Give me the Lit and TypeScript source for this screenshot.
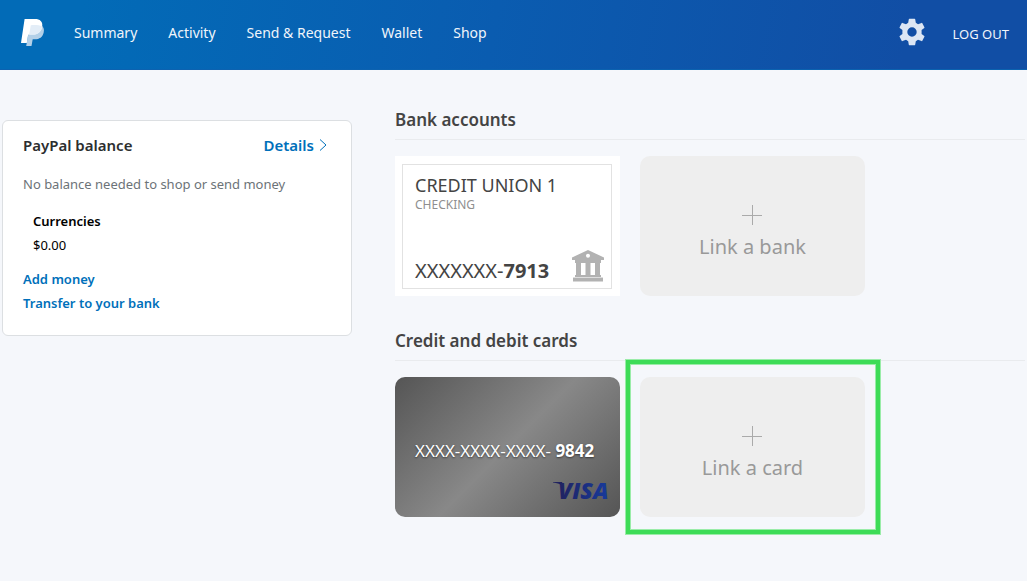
import { LitElement, html, css, svg } from "lit";
import { customElement, property } from "lit/decorators.js";

@customElement("site-header")
class SiteHeader extends LitElement {
  static styles = css`
    :host {
      display: block;
    }
    .bar {
      box-sizing: border-box;
      height: 70px;
      padding: 0 18px 3px 21px;
      display: flex;
      align-items: center;
      color: #fff;
      background: linear-gradient(100deg, #026bb7 8%, #0a5cb0 48%, #114ea5 88%);
      border-bottom: 1px solid #0c62b0;
    }
    .logo {
      display: block;
      width: 24px;
      height: 28px;
      margin-right: 29px;
    }
    .logo svg,
    .gear svg {
      display: block;
    }
    .nav {
      display: flex;
      gap: 31px;
      flex: 1;
    }
    a {
      color: #f0f5fb;
      text-decoration: none;
      font-size: 14px;
      line-height: 20px;
    }
    .gear {
      padding: 0 0 2px;
      border: 0;
      background: none;
      margin-right: 28px;
    }
    .logout {
      font-size: 13px;
      padding-top: 2px;
    }
  `;
  render() {
    const items = ["Summary", "Activity", "Send & Request", "Wallet", "Shop"];
    return html`<header class="bar">
      <a class="logo" href="#" aria-label="PayPal">
        <svg width="24" height="28" viewBox="0 0 24 28">
          <path d="M9 6h10.500c3 1.500 4 4 3.200 7.400-1 4.600-4.200 6.800-8.800 6.800h-2.200L10.500 27H5.200z" fill="#b3d0e8" />
          <path d="M3.600 0H14c5 0 8 2.600 7.200 7.400-1 5.600-4.600 8.200-9.600 8.200H8.200c-.7 0-1 .5-1.200 1.200L5.800 24H0z" fill="#fff" />
          <path d="M9.800 6.200c3.600-.6 8.200-.4 11.400 1.200-1 5.600-4.600 8.200-9.600 8.200H8.200z" fill="#e3edf7" />
        </svg>
      </a>
      <nav class="nav">${items.map((t) => html`<a href="#">${t}</a>`)}</nav>
      <button class="gear" aria-label="Settings">
        <svg width="26" height="28" viewBox="0 0 26 28">
          <path
            fill="#dce6f4"
            fill-rule="evenodd"
            d="M9.800 1.200Q9.900.8 10.300.8h5.400q.4 0 .5.400l.6 3.600 2.200 1.400 3.500-1.300q.5-.2.700.2l2.200 4.100q.2.400-.1.700l-2.700 2.200v3.800l2.700 2.200q.3.300.1.700l-2.200 4.100q-.2.400-.7.200L19 21.800l-2.200 1.400-.6 3.600q-.1.400-.5.400h-5.400q-.4 0-.5-.4l-.6-3.600L7 21.800l-3.500 1.300q-.5.200-.7-.2L.600 18.800q-.2-.4.100-.7l2.700-2.200v-3.800L.700 9.900Q.400 9.600.600 9.200l2.200-4.100q.2-.4.700-.2L7 6.200l2.200-1.400zM13 9.300a4.700 4.700 0 1 0 0 9.400 4.700 4.700 0 1 0 0-9.400z"
          />
        </svg>
      </button>
      <a class="logout" href="#">LOG OUT</a>
    </header>`;
  }
}

@customElement("balance-card")
class BalanceCard extends LitElement {
  static styles = css`
    :host {
      display: block;
    }
    .card {
      background: #fff;
      border: 1px solid #dcdfe2;
      border-radius: 6px;
      padding: 13px 20px 20px;
      font-size: 13px;
      line-height: 24px;
    }
    .top {
      display: flex;
      justify-content: space-between;
      align-items: center;
      margin-bottom: 16px;
      padding-right: 4px;
    }
    h2 {
      margin: 0;
      font-size: 15px;
      line-height: 22px;
      font-weight: 600;
      color: #2c2e2f;
    }
    a {
      color: #0070ba;
      font-weight: 600;
      text-decoration: none;
    }
    .details {
      display: flex;
      align-items: center;
      gap: 5px;
      font-size: 15px;
      line-height: 22px;
    }
    .note {
      margin: 0 0 13px;
      color: #6c7378;
    }
    .money {
      margin: 0 0 10px 10px;
      color: #000;
    }
    dt {
      font-weight: 600;
    }
    dd {
      margin: 0;
    }
    .links {
      display: flex;
      flex-direction: column;
      align-items: flex-start;
    }
  `;
  render() {
    return html`<section class="card">
      <div class="top">
        <h2>PayPal balance</h2>
        <a class="details" href="#">
          Details
          <svg width="8" height="12" viewBox="0 0 8 12">
            <path d="M1 .5l6 5.500-6 5.500" fill="none" stroke="#0070ba" />
          </svg>
        </a>
      </div>
      <p class="note">No balance needed to shop or send money</p>
      <dl class="money">
        <dt>Currencies</dt>
        <dd>$0.00</dd>
      </dl>
      <div class="links">
        <a href="#">Add money</a>
        <a href="#">Transfer to your bank</a>
      </div>
    </section>`;
  }
}

@customElement("link-tile")
class LinkTile extends LitElement {
  @property() label = "";
  @property({ type: Boolean }) highlighted = false;
  static styles = css`
    :host {
      display: block;
      position: relative;
    }
    .tile {
      box-sizing: border-box;
      width: 100%;
      height: 140px;
      padding: 14px 0 0;
      border: 0;
      border-radius: 10px;
      background: #eee;
      color: #999;
      font-family: inherit;
      font-size: 20px;
      line-height: 28px;
      display: flex;
      flex-direction: column;
      align-items: center;
      justify-content: center;
      gap: 8px;
    }
    .ring {
      position: absolute;
      inset: -17px -15px -17px -14px;
      border: 4px solid #3ddc57;
      box-shadow: 0 0 0 1px #9aeca8, inset 0 0 0 1px #9aeca8;
      pointer-events: none;
    }
  `;
  render() {
    return html`<button class="tile">
        <svg width="21" height="20" viewBox="0 0 21 20">
          <path d="M0 10.500h20M10.500 0v20" stroke="#aaa" />
        </svg>
        <span>${this.label}</span>
      </button>
      ${this.highlighted ? html`<div class="ring"></div>` : ""}`;
  }
}

@customElement("app-root")
class AppRoot extends LitElement {
  static styles = css`
    :host {
      display: block;
      min-height: 100vh;
      background: #f5f7fb;
      font-family: "Noto Sans", "Open Sans", sans-serif;
    }
    .page {
      display: grid;
      grid-template-columns: 350px minmax(0, 1fr);
      column-gap: 43px;
      align-items: start;
      padding: 37px 2px 0;
    }
    .side {
      padding-top: 13px;
    }
    .group {
      margin-bottom: 32px;
    }
    .group h2 {
      margin: 0 0 16px;
      padding-bottom: 6px;
      border-bottom: 1px solid #e9ebee;
      color: #444;
      font-size: 17px;
      line-height: 26px;
      font-weight: 600;
    }
    .tiles {
      display: grid;
      grid-template-columns: repeat(auto-fill, 225px);
      gap: 20px;
    }
    .bank,
    .credit {
      box-sizing: border-box;
      height: 140px;
      text-decoration: none;
    }
    .bank {
      background: #fff;
      padding: 8px 8px 7px 7px;
    }
    .frame {
      box-sizing: border-box;
      height: 100%;
      border: 1px solid #e2e2e2;
      padding: 8px 7px 4px 12px;
      display: flex;
      flex-direction: column;
      justify-content: space-between;
      color: #444;
    }
    .name {
      font-size: 18px;
      line-height: 24px;
    }
    .kind {
      font-size: 12px;
      line-height: 16px;
      color: #8f8f8f;
    }
    .row {
      display: flex;
      justify-content: space-between;
      align-items: flex-end;
      font-size: 20px;
      line-height: 26px;
    }
    .row svg {
      margin-bottom: 2px;
    }
    .row b,
    .number b {
      font-weight: 700;
    }
    .credit {
      display: flex;
      flex-direction: column;
      justify-content: flex-end;
      border-radius: 10px;
      padding: 0 8px 16px 20px;
      color: #fff;
      background: linear-gradient(135deg, #555 0%, #888 50%, #555 100%);
    }
    .number {
      font-size: 17px;
      line-height: 24px;
      margin-bottom: 16px;
      text-shadow: 0 1px 2px rgba(0, 0, 0, 0.5);
      white-space: nowrap;
    }
    .visa {
      align-self: flex-end;
      display: block;
      overflow: visible;
    }
  `;
  bankIcon() {
    return svg`<svg width="32" height="32" viewBox="0 0 32 32" fill="#b2b2b2">
      <path fill-rule="evenodd" d="M16 0l16 7.500V10H0V7.500zM16 3.700a2 2 0 1 0 0 4 2 2 0 1 0 0-4z"/>
      <path d="M3 10h26v3H3zM3 25h26v2.500H3zM1 28h30v3.500H1zM4 13h5v12H4zM13.500 13h5v12h-5zM23 13h5v12h-5z"/>
      <path fill="#ddd" d="M1 27h30v1H1z"/>
    </svg>`;
  }
  render() {
    return html`<site-header></site-header>
      <main class="page">
        <aside class="side"><balance-card></balance-card></aside>
        <div>
          <section class="group">
            <h2>Bank accounts</h2>
            <div class="tiles">
              <a class="bank" href="#">
                <div class="frame">
                  <div>
                    <div class="name">CREDIT UNION 1</div>
                    <div class="kind">CHECKING</div>
                  </div>
                  <div class="row">
                    <span>XXXXXXX-<b>7913</b></span>
                    ${this.bankIcon()}
                  </div>
                </div>
              </a>
              <link-tile label="Link a bank"></link-tile>
            </div>
          </section>
          <section class="group">
            <h2>Credit and debit cards</h2>
            <div class="tiles">
              <a class="credit" href="#">
                <div class="number">XXXX-XXXX-XXXX- <b>9842</b></div>
                <svg class="visa" width="60" height="22" viewBox="0 0 60 22" role="img" aria-label="Visa">
                  <defs>
                    <linearGradient id="v" x1="0" x2="1">
                      <stop offset="0" stop-color="#20225f" />
                      <stop offset="1" stop-color="#173a9c" />
                    </linearGradient>
                  </defs>
                  <path d="M1 3h9l2 5Q7 4 1 3.600z" fill="#20225f" />
                  <text x="6" y="20" fill="url(#v)" font-family="Open Sans, sans-serif" font-size="23" font-weight="800" font-style="italic">VISA</text>
                </svg>
              </a>
              <link-tile label="Link a card" highlighted></link-tile>
            </div>
          </section>
        </div>
      </main>`;
  }
}
